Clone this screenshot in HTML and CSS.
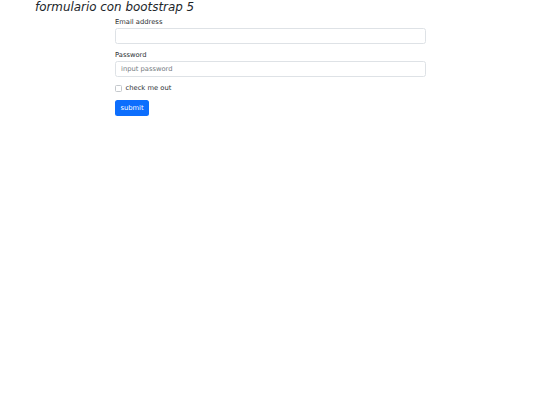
FILE: index.html
```html
<!DOCTYPE html>
<html lang="es">
<head>
<meta charset="utf-8">
<title>formulario</title>
<link rel="stylesheet" href="styles.css">
</head>
<body>
<h1 class="title">formulario con bootstrap 5</h1>
<form class="form">
  <div class="group">
    <label class="label" for="email">Email address</label>
    <input class="control" id="email" type="email">
  </div>
  <div class="group">
    <label class="label" for="pw">Password</label>
    <input class="control" id="pw" type="password" placeholder="input password">
  </div>
  <div class="group check">
    <span class="box"></span>
    <span class="check-label">check me out</span>
  </div>
  <button class="btn" type="button">submit</button>
</form>
</body>
</html>
```

FILE: styles.css
```css
* { box-sizing: border-box; }
body {
  margin: 0;
  background: #fff;
  color: #212529;
  font-family: "DejaVu Sans", sans-serif;
}
.title {
  margin: 0 0 3px 0;
  padding-left: 35px;
  font-size: 11.9px;
  line-height: 14px;
  font-weight: normal;
  font-style: italic;
  color: #212529;
}
.form {
  margin-left: 115px;
  width: 311px;
}
.group {
  display: flex;
  flex-direction: column;
  margin-bottom: 6px;
}
.label {
  font-size: 6.75px;
  line-height: 10px;
  margin-bottom: 1px;
  color: #2b2f33;
}
.control {
  height: 16px;
  width: 100%;
  border: 1px solid #dee2e6;
  border-radius: 2.5px;
  padding: 0 5px;
  font-family: "DejaVu Sans", sans-serif;
  font-size: 6.75px;
  color: #212529;
  background: #fff;
  outline: none;
}
.control::placeholder { color: #757b81; opacity: 1; }
.check {
  flex-direction: row;
  align-items: center;
  height: 10px;
  margin-bottom: 7px;
  gap: 3.5px;
}
.box {
  width: 7px;
  height: 7px;
  border: 1px solid #c4c8cc;
  border-radius: 1.5px;
  background: #fff;
}
.check-label {
  font-size: 6.75px;
  line-height: 10px;
  color: #2b2f33;
}
.btn {
  display: block;
  width: 34px;
  height: 16px;
  padding: 0;
  border: 0;
  border-radius: 2.5px;
  background: #0d6efd;
  color: #fff;
  font-family: "DejaVu Sans", sans-serif;
  font-size: 6.75px;
  line-height: 16px;
  text-align: center;
}
```
